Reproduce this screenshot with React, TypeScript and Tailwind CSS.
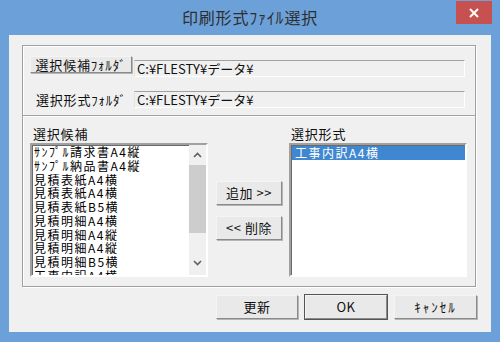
import React from 'react';

const jp = { fontFamily: '"Noto Sans CJK JP", "Noto Sans", sans-serif' };

const candidates = [
  'ｻﾝﾌﾟﾙ請求書A4縦',
  'ｻﾝﾌﾟﾙ納品書A4縦',
  '見積表紙A4横',
  '見積表紙A4横',
  '見積表紙B5横',
  '見積明細A4横',
  '見積明細A4縦',
  '見積明細A4縦',
  '見積明細B5横',
  '工事内訳A4横',
];

function Btn({ label, className = '', isDefault = false }: { label: string; className?: string; isDefault?: boolean }) {
  return (
    <div
      className={`flex items-center justify-center bg-[#e9e9e9] border border-t-[#f4f4f4] border-l-[#f4f4f4] border-r-[#8a8a8a] border-b-[#8a8a8a] shadow-[1px_1px_0_#b5b5b5] text-[13px] tracking-[0.5px] text-[#111] ${
        isDefault ? 'outline outline-1 outline-[#555]' : ''
      } ${className}`}
    >
      {label}
    </div>
  );
}

function Field({ text, className = '' }: { text: string; className?: string }) {
  return (
    <div
      className={`flex items-center pl-[2px] border-t border-t-[#a0a0a0] border-b border-b-[#ffffff] border-l border-l-[#e3e3e3] border-r border-r-[#ffffff] bg-[#f0f0f0] text-[13px] text-[#111] leading-none ${className}`}
    >
      {text}
    </div>
  );
}

function Chevron({ up }: { up: boolean }) {
  return (
    <svg width="9" height="6" viewBox="0 0 9 6">
      <path d={up ? 'M1 5 L4.5 1.5 L8 5' : 'M1 1 L4.5 4.5 L8 1'} fill="none" stroke="#606060" strokeWidth="1.6" />
    </svg>
  );
}

export default function App() {
  return (
    <div className="w-[500px] h-[342px] bg-[#6ca0d9] flex flex-col overflow-hidden select-none" style={jp}>
      {/* title bar */}
      <div className="relative h-[35px] flex items-center justify-center">
        <span className="text-[16px] tracking-[0.8px] text-[#2e2e2e] -mt-[1px]">印刷形式ﾌｧｲﾙ選択</span>
        <div className="absolute right-[8px] top-[1px] w-[36px] h-[23px] bg-[#c75050] flex items-center justify-center">
          <svg width="10" height="10" viewBox="0 0 10 10">
            <path d="M1 1 L9 9 M9 1 L1 9" stroke="#fff" strokeWidth="2" />
          </svg>
        </div>
      </div>

      {/* client */}
      <div className="mx-[9px] h-[297px] bg-[#f0f0f0] flex flex-col">
        {/* folder group */}
        <div className="ml-[13px] mt-[10px] w-[454px] h-[71px] border border-[#a0a0a0] shadow-[inset_1px_1px_0_#fff,1px_1px_0_#fff] pl-[7px] pt-[10px] flex flex-col">
          <div className="flex items-start">
            <Btn label="選択候補ﾌｫﾙﾀﾞ" className="w-[102px] h-[17px] tracking-[0.8px]" />
            <Field text="C:¥FLESTY¥データ¥" className="ml-[2px] mt-[4px] w-[331px] h-[17px]" />
          </div>
          <div className="flex items-center mt-[13px]">
            <span className="w-[104px] pl-[6px] text-[13px] tracking-[0.8px] text-[#111]">選択形式ﾌｫﾙﾀﾞ</span>
            <Field text="C:¥FLESTY¥データ¥" className="w-[331px] h-[17px]" />
          </div>
        </div>

        {/* list group */}
        <div className="ml-[13px] w-[454px] h-[171px] border-x border-b border-[#a0a0a0] shadow-[inset_1px_0_0_#fff,1px_1px_0_#fff] pl-[7px] flex">
          <div className="flex flex-col w-[178px]">
            <div className="h-[19px] mt-[8px] pl-[3px] text-[13px] tracking-[0.8px] text-[#111] leading-[19px]">選択候補</div>
            <div className="h-[134px] border-2 border-t-[#a0a0a0] border-l-[#a0a0a0] border-b-[#ffffff] border-r-[#ffffff] shadow-[inset_1px_1px_0_#696969] bg-white flex overflow-hidden">
              <div className="flex-1 pl-[2px] overflow-hidden">
                {candidates.map((c, i) => (
                  <div key={i} className="h-[13.75px] leading-[13.75px] text-[12px] tracking-[1.5px] text-black whitespace-nowrap">
                    {c}
                  </div>
                ))}
              </div>
              <div className="w-[17px] bg-[#f0f0f0] flex flex-col items-center">
                <div className="h-[20px] flex items-center justify-center">
                  <Chevron up />
                </div>
                <div className="w-[17px] h-[68px] bg-[#cdcdcd]" />
                <div className="flex-1" />
                <div className="h-[20px] flex items-center justify-center mb-[2px]">
                  <Chevron up={false} />
                </div>
              </div>
            </div>
          </div>

          <div className="flex flex-col ml-[8px] w-[66px] pt-[65px]">
            <Btn label="追加 >>" className="h-[24px]" />
            <Btn label="<< 削除" className="h-[24px] mt-[11px]" />
          </div>

          <div className="flex flex-col ml-[7px] w-[178px]">
            <div className="h-[19px] mt-[8px] pl-[2px] text-[13px] tracking-[0.8px] text-[#111] leading-[19px]">選択形式</div>
            <div className="h-[134px] border-2 border-t-[#a0a0a0] border-l-[#a0a0a0] border-b-[#ffffff] border-r-[#ffffff] shadow-[inset_1px_1px_0_#696969] bg-white pl-[1px] pt-[1px]">
              <div className="h-[14px] bg-[#3f87d1] text-white text-[12px] tracking-[1.5px] leading-[14px] pl-[3px] whitespace-nowrap">
                工事内訳A4横
              </div>
            </div>
          </div>
        </div>

        {/* bottom buttons */}
        <div className="flex ml-[207px] mt-[8px] gap-[7px]">
          <Btn label="更新" className="w-[82px] h-[24px]" />
          <Btn label="OK" className="w-[82px] h-[24px]" isDefault />
          <Btn label="ｷｬﾝｾﾙ" className="w-[83px] h-[24px] tracking-[2px]" />
        </div>
      </div>
    </div>
  );
}
